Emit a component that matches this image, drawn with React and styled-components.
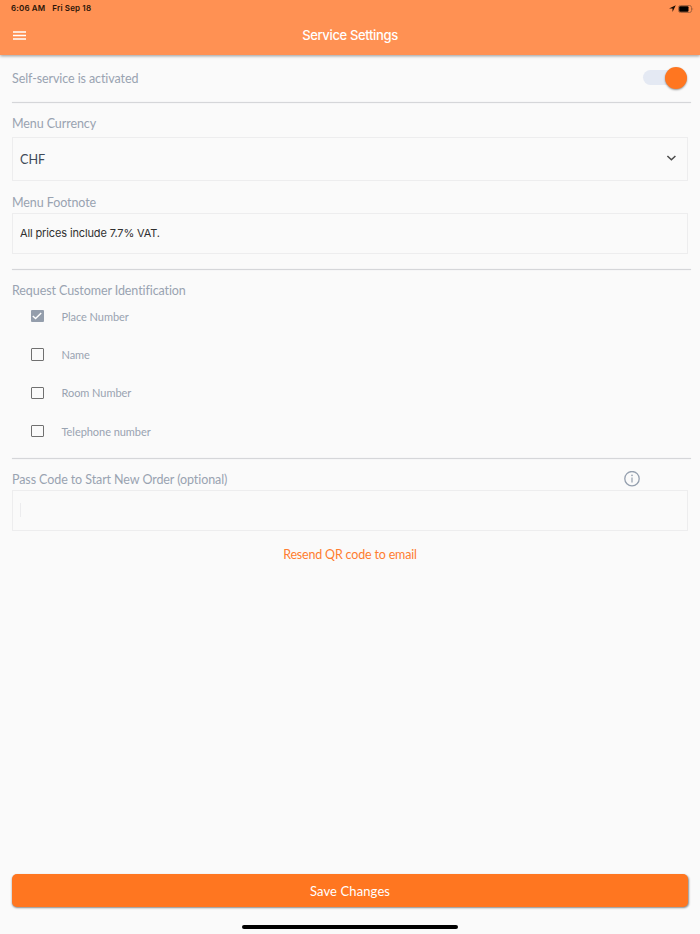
import React, { useState } from 'react';
import styled, { createGlobalStyle } from 'styled-components';

const GlobalStyle = createGlobalStyle`
  * {
    box-sizing: border-box;
  }

  body {
    margin: 0;
    background: #fafafa;
    font-family: Lato, sans-serif;
  }
`;

const Screen = styled.div`
  display: flex;
  flex-direction: column;
  height: 934px;
  overflow: hidden;
  background: #fafafa;
`;

const Header = styled.header`
  flex: none;
  height: 55px;
  background: #ff9153;
  box-shadow: 0 1px 3px rgba(0, 0, 0, 0.4);
  font-family: Inter, sans-serif;
`;

const StatusBar = styled.div`
  display: flex;
  align-items: center;
  height: 16px;
  padding: 0 6px 0 11px;
  color: #2b1509;
  font-size: 8px;
  font-weight: 600;
  letter-spacing: 0.15px;
`;

const StatusDate = styled.span`
  margin-left: 7px;
`;

const StatusIcons = styled.div`
  display: flex;
  align-items: center;
  gap: 2px;
  margin-left: auto;
  padding-top: 1px;
`;

const NavBar = styled.div`
  display: grid;
  grid-template-columns: 40px 1fr 40px;
  align-items: center;
  height: 39px;
`;

const MenuButton = styled.button`
  display: flex;
  padding: 0 0 0 13px;
  border: none;
  background: none;
  color: #fff;
`;

const Title = styled.h1`
  margin: 0;
  padding-bottom: 1px;
  color: #fff;
  font-size: 13px;
  font-weight: 500;
  letter-spacing: -0.35px;
  text-align: center;
`;

const Content = styled.main`
  flex: 1;
  padding: 0 12px;
`;

const Divider = styled.hr`
  height: 1px;
  margin: 0 -3px 0 0;
  border: none;
  background: #d5d6d9;
  box-shadow: 0 0 1px #d5d6d9;
`;

const Row = styled.div`
  display: flex;
  align-items: center;
  justify-content: space-between;
  height: ${props => props.$height}px;
  padding-top: ${props => props.$top || 0}px;
  padding-bottom: ${props => props.$bottom || 0}px;
`;

const Label = styled.span`
  padding-top: 2px;
  color: #99a3b1;
  font-size: 12.5px;
  line-height: 16px;
  letter-spacing: -0.09px;
`;

const Switch = styled.button`
  display: flex;
  align-items: center;
  justify-content: ${props => (props.$on ? 'flex-end' : 'flex-start')};
  width: 44px;
  height: 15px;
  margin-right: 1px;
  padding: 0;
  border: none;
  border-radius: 8px;
  background: #e4e9f3;
`;

const Thumb = styled.span`
  flex: none;
  width: 22px;
  height: 22px;
  border-radius: 50%;
  background: #ff7620;
  box-shadow: 0 1px 2px rgba(0, 0, 0, 0.4);
`;

const Field = styled.div`
  display: flex;
  align-items: center;
  justify-content: space-between;
  height: ${props => props.$height}px;
  padding: 0 11px 1px 7px;
  border: 1px solid #ededee;
`;

const SelectValue = styled.span`
  padding-top: 1px;
  color: #3f4a59;
  font-size: 12.6px;
`;

const TextInput = styled.input`
  width: 100%;
  padding: 0;
  border: none;
  outline: none;
  background: none;
  color: #303030;
  font-family: Inter, sans-serif;
  font-size: 11px;
  letter-spacing: -0.13px;
`;

const Caret = styled.span`
  width: 1px;
  height: 14px;
  background: #ececee;
`;

const Options = styled.div`
  display: grid;
  grid-auto-rows: 38.33px;
  height: 161px;
`;

const Option = styled.div`
  display: flex;
  align-items: center;
  gap: 18px;
  padding-left: 19px;
  color: #99a3b1;
  font-size: 11px;
  letter-spacing: -0.05px;
`;

const Box = styled.span`
  display: flex;
  align-items: center;
  justify-content: center;
  width: 12.5px;
  height: 12.5px;
  border: ${props => (props.$checked ? 'none' : '1.4px solid #707070')};
  border-radius: 1px;
  background: ${props => (props.$checked ? '#949eac' : 'transparent')};
`;

const InfoIcon = styled.svg`
  margin-right: 48px;
`;

const LinkRow = styled.div`
  padding-top: 12px;
  text-align: center;
`;

const ResendLink = styled.button`
  padding: 0;
  border: none;
  background: none;
  color: #ff7d30;
  font-family: inherit;
  font-size: 12.5px;
  line-height: 16px;
  letter-spacing: -0.18px;
`;

const Footer = styled.footer`
  display: flex;
  flex-direction: column;
  align-items: center;
  padding: 0 12px 5px;
`;

const SaveButton = styled.button`
  width: 100%;
  height: 33px;
  padding: 0;
  border: none;
  border-radius: 5px;
  background: #ff7620;
  box-shadow: 0.5px 1px 2px rgba(0, 0, 0, 0.45);
  color: #fff;
  font-family: inherit;
  font-size: 13px;
  letter-spacing: 0.12px;
`;

const HomeIndicator = styled.div`
  width: 216px;
  height: 4px;
  margin-top: 18px;
  border-radius: 2px;
  background: #000;
`;

const identification = [
  { name: 'Place Number', checked: true },
  { name: 'Name', checked: false },
  { name: 'Room Number', checked: false },
  { name: 'Telephone number', checked: false },
];

const App = () => {
  const [active, setActive] = useState(true);
  const [footnote, setFootnote] = useState('All prices include 7.7% VAT.');

  return (
    <Screen>
      <GlobalStyle />
      <Header>
        <StatusBar>
          <span>6:06 AM</span>
          <StatusDate>Fri Sep 18</StatusDate>
          <StatusIcons>
            <svg width="7" height="7" viewBox="0 0 7 7">
              <path d="M6.8 0.2L0 3.5H3.5V7Z" fill="#1b0d05" />
            </svg>
            <svg width="16" height="8" viewBox="0 0 16 8">
              <rect x="0.5" y="0.5" width="13" height="7" rx="2" fill="none" stroke="#a9643d" />
              <rect x="1.2" y="1.2" width="9.3" height="5.6" rx="1" fill="#000" />
              <path d="M14.5 2.6Q16 4 14.5 5.4Z" fill="#a9643d" />
            </svg>
          </StatusIcons>
        </StatusBar>
        <NavBar>
          <MenuButton aria-label="Menu">
            <svg width="13" height="9" viewBox="0 0 13 9">
              <path d="M0 0.9H13M0 4.5H13M0 8.1H13" stroke="currentColor" strokeWidth="1.5" />
            </svg>
          </MenuButton>
          <Title>Service Settings</Title>
        </NavBar>
      </Header>

      <Content>
        <Row $height={47} $bottom={2}>
          <Label>Self-service is activated</Label>
          <Switch $on={active} onClick={() => setActive(!active)} aria-label="Self-service">
            <Thumb />
          </Switch>
        </Row>
        <Divider />

        <Row $height={34} $top={6}>
          <Label>Menu Currency</Label>
        </Row>
        <Field $height={44}>
          <SelectValue>CHF</SelectValue>
          <svg width="10" height="7" viewBox="0 0 10 7">
            <path d="M1.4 1L5.4 4.8L9.4 1" fill="none" stroke="#4a4a4a" strokeWidth="1.5" />
          </svg>
        </Field>
        <Row $height={32} $top={10}>
          <Label>Menu Footnote</Label>
        </Row>
        <Field $height={41}>
          <TextInput value={footnote} onChange={e => setFootnote(e.target.value)} />
        </Field>
        <Row $height={15} />
        <Divider />

        <Row $height={27} $top={13}>
          <Label>Request Customer Identification</Label>
        </Row>
        <Options>
          {identification.map(item => (
            <Option key={item.name}>
              <Box $checked={item.checked}>
                {item.checked && (
                  <svg width="10" height="8" viewBox="0 0 10 8">
                    <path d="M0.8 4L3.6 6.6L9.2 1" fill="none" stroke="#fff" strokeWidth="1.4" />
                  </svg>
                )}
              </Box>
              <span>{item.name}</span>
            </Option>
          ))}
        </Options>
        <Divider />

        <Row $height={31} $top={9}>
          <Label>Pass Code to Start New Order (optional)</Label>
          <InfoIcon width="16" height="16" viewBox="0 0 16 16">
            <circle cx="8" cy="7.7" r="7.2" fill="none" stroke="#949fae" strokeWidth="1.3" />
            <path d="M8 6.4V11.6" stroke="#949fae" strokeWidth="1.2" />
            <circle cx="8" cy="4.4" r="0.8" fill="#949fae" />
          </InfoIcon>
        </Row>
        <Field $height={41}>
          <Caret />
        </Field>
        <LinkRow>
          <ResendLink>Resend QR code to email</ResendLink>
        </LinkRow>
      </Content>

      <Footer>
        <SaveButton>Save Changes</SaveButton>
        <HomeIndicator />
      </Footer>
    </Screen>
  );
};

export default App;
